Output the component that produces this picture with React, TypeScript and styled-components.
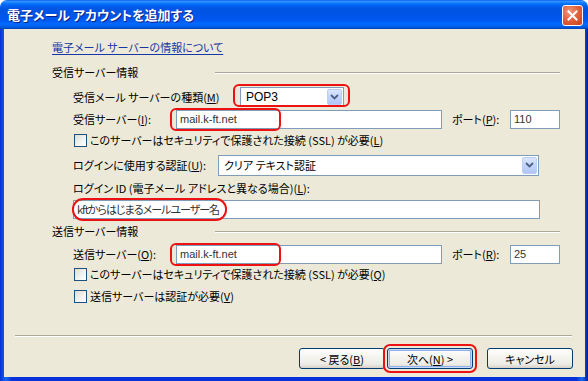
import React from 'react';
import styled, { createGlobalStyle } from 'styled-components';

const GlobalStyle = createGlobalStyle`
    html, body {
        margin: 0;
        padding: 0;
        background: #ffffff;
        overflow: hidden;
    }
    body {
        font-family: "Noto Sans CJK JP", "Liberation Sans", sans-serif;
        font-size: 11px;
        color: #000000;
        font-feature-settings: "palt";
    }
`;

const Window = styled.div`
    width: 588px;
    height: 381px;
    display: flex;
    flex-direction: column;
`;

const TitleBar = styled.div`
    height: 29px;
    flex: none;
    display: flex;
    align-items: center;
    justify-content: space-between;
    padding: 0 5px 0 7px;
    border-radius: 7px 7px 0 0;
    box-sizing: border-box;
    background: linear-gradient(
        to bottom,
        #0058ee 0%,
        #3593ff 4%,
        #288eff 7%,
        #127dff 10%,
        #036ffc 14%,
        #0262ee 20%,
        #0057e5 28%,
        #0054e3 40%,
        #0055eb 60%,
        #005bf5 72%,
        #026afe 82%,
        #0062ef 90%,
        #0052d6 96%,
        #0040ab 100%
    );
`;

const Title = styled.div`
    color: #ffffff;
    font-weight: 700;
    font-size: 13px;
    text-shadow: 1px 1px 0 #0a1f8a;
    line-height: 16px;
    margin-top: 1px;
`;

const CloseButton = styled.div`
    width: 21px;
    height: 21px;
    box-sizing: border-box;
    border: 1px solid #ffffff;
    border-radius: 3px;
    background: radial-gradient(circle at 35% 30%, #f09a7c 0%, #e2643f 45%, #c7401a 100%);
    display: flex;
    align-items: center;
    justify-content: center;
    margin-top: 1px;
`;

const Frame = styled.div`
    flex: 1;
    display: flex;
    padding: 0 4px 4px 4px;
    background: linear-gradient(to right, #0831d9 0%, #166aee 1%, #0831d9 2%, #0831d9 98%, #166aee 99%, #001ea0 100%);
`;

const Body = styled.div`
    flex: 1;
    background: #ece9d8;
    display: flex;
    flex-direction: column;
`;

const Content = styled.div`
    padding: 8px 25px 0 48px;
    display: flex;
    flex-direction: column;
`;

const Row = styled.div<{ $mt?: number; $indent?: boolean }>`
    display: flex;
    align-items: center;
    height: 20px;
    margin-top: ${p => p.$mt ?? 0}px;
    padding-left: ${p => (p.$indent ? 21 : 0)}px;
    white-space: nowrap;
`;

const Link = styled.span`
    color: #1538a6;
    text-decoration: underline;
    text-underline-offset: 2px;
`;

const SectionTitle = styled.div`
    width: 163px;
    flex: none;
`;

const Rule = styled.div`
    flex: 1;
    border-top: 1px solid #aca899;
    border-bottom: 1px solid #ffffff;
    margin-top: 1px;
`;

const Label = styled.div<{ $w?: number }>`
    width: ${p => (p.$w ? `${p.$w}px` : 'auto')};
    flex: none;
`;

const Field = styled.div<{ $w?: number }>`
    position: relative;
    width: ${p => (p.$w ? `${p.$w}px` : 'auto')};
    flex: none;
`;

const TextBox = styled.div<{ $latin?: boolean; $tight?: boolean }>`
    height: 19px;
    box-sizing: border-box;
    border: 1px solid #7f9db9;
    background: #ffffff;
    padding-left: 3px;
    display: flex;
    align-items: center;
    font-family: ${p => (p.$latin ? '"Liberation Sans", "Noto Sans CJK JP", sans-serif' : '"Noto Sans CJK JP", sans-serif')};
    font-size: 11px;
    letter-spacing: ${p => (p.$tight ? '-1px' : 'normal')};
    color: #333333;
`;

const Combo = styled.div<{ $h?: number }>`
    height: ${p => p.$h ?? 20}px;
    box-sizing: border-box;
    border: 1px solid #7f9db9;
    background: #ffffff;
    display: flex;
    align-items: center;
    padding: 1px;
`;

const ComboText = styled.div<{ $latin?: boolean }>`
    flex: 1;
    padding-left: 4px;
    font-family: ${p => (p.$latin ? '"Liberation Sans", "Noto Sans CJK JP", sans-serif' : '"Noto Sans CJK JP", sans-serif')};
    font-size: ${p => (p.$latin ? 12 : 11)}px;
`;

const DropButton = styled.div`
    width: 15px;
    align-self: stretch;
    box-sizing: border-box;
    border: 1px solid #bacdf4;
    border-radius: 2px;
    background: linear-gradient(to bottom, #dbe6fd 0%, #c2d4fb 50%, #b1c6f5 100%);
    display: flex;
    align-items: center;
    justify-content: center;
`;

const PortLabel = styled.div`
    width: 58px;
    margin-left: 10px;
    flex: none;
`;

const Ring = styled.div<{ $l: number; $t: number; $w: number; $h: number; $r?: number }>`
    position: absolute;
    left: ${p => p.$l}px;
    top: ${p => p.$t}px;
    width: ${p => p.$w}px;
    height: ${p => p.$h}px;
    box-sizing: border-box;
    border: 2px solid #ee1111;
    border-radius: ${p => p.$r ?? 6}px;
    pointer-events: none;
`;

const CheckBox = styled.div`
    width: 13px;
    height: 13px;
    box-sizing: border-box;
    border: 1px solid #1c5180;
    background: linear-gradient(135deg, #dcdcd7 0%, #f4f4f0 60%, #ffffff 100%);
    margin: 0 3px 0 1px;
    flex: none;
`;

const Footer = styled.div`
    margin-top: auto;
    padding-bottom: 8px;
`;

const Separator = styled.div`
    margin: 0 13px 0 11px;
    border-top: 1px solid #aca899;
    border-bottom: 1px solid #ffffff;
`;

const ButtonRow = styled.div`
    display: flex;
    justify-content: flex-end;
    padding-right: 12px;
    margin-top: 11px;
`;

const Button = styled.div<{ $ml?: number; $default?: boolean }>`
    position: relative;
    width: 86px;
    height: 21px;
    box-sizing: border-box;
    margin-left: ${p => p.$ml ?? 0}px;
    border: 1px solid #003c74;
    border-radius: 3px;
    background: linear-gradient(to bottom, #ffffff 0%, #f5f4ef 40%, #ecebe5 80%, #d6d0c5 100%);
    box-shadow: ${p => (p.$default ? 'inset 0 0 0 1px #c9daf6, inset 0 0 0 2px #8eb0ec' : 'none')};
    display: flex;
    align-items: center;
    justify-content: center;
    font-size: 11px;
    white-space: nowrap;
`;

const Chevron = () => (
    <svg width="9" height="6" viewBox="0 0 9 6">
        <path d="M1 1 L4.5 4.5 L8 1" fill="none" stroke="#4d6185" strokeWidth="1.8" />
    </svg>
);

const CloseX = () => (
    <svg width="11" height="11" viewBox="0 0 11 11">
        <path d="M1.5 1.5 L9.5 9.5 M9.5 1.5 L1.5 9.5" stroke="#ffffff" strokeWidth="2" strokeLinecap="square" />
    </svg>
);

export default function App() {
    return (
        <>
            <GlobalStyle />
            <Window>
                <TitleBar>
                    <Title>電子メール アカウントを追加する</Title>
                    <CloseButton>
                        <CloseX />
                    </CloseButton>
                </TitleBar>
                <Frame>
                    <Body>
                        <Content>
                            <Row>
                                <Link>電子メール サーバーの情報について</Link>
                            </Row>

                            <Row $mt={5}>
                                <SectionTitle>受信サーバー情報</SectionTitle>
                                <Rule />
                            </Row>

                            <Row $mt={5} $indent>
                                <Label $w={167}>受信メール サーバーの種類(<u>M</u>)</Label>
                                <Field $w={104}>
                                    <Combo>
                                        <ComboText $latin>POP3</ComboText>
                                        <DropButton>
                                            <Chevron />
                                        </DropButton>
                                    </Combo>
                                    <Ring $l={-7} $t={-3} $w={117} $h={23} />
                                </Field>
                            </Row>

                            <Row $mt={2} $indent>
                                <Label $w={103}>受信サーバー(<u>I</u>):</Label>
                                <Field $w={266}>
                                    <TextBox $latin>mail.k-ft.net</TextBox>
                                    <Ring $l={-6} $t={-2} $w={111} $h={23} />
                                </Field>
                                <PortLabel>ポート(<u>P</u>):</PortLabel>
                                <Field $w={50}>
                                    <TextBox $latin>110</TextBox>
                                </Field>
                            </Row>

                            <Row $mt={1} $indent>
                                <CheckBox />
                                <span>このサーバーはセキュリティで保護された接続 (SSL) が必要(<u>L</u>)</span>
                            </Row>

                            <Row $mt={5} $indent>
                                <Label $w={145}>ログインに使用する認証(<u>U</u>):</Label>
                                <Field $w={321}>
                                    <Combo $h={21}>
                                        <ComboText>クリア テキスト認証</ComboText>
                                        <DropButton>
                                            <Chevron />
                                        </DropButton>
                                    </Combo>
                                </Field>
                            </Row>

                            <Row $mt={3} $indent>
                                <Label>ログイン ID (電子メール アドレスと異なる場合)(<u>L</u>):</Label>
                            </Row>

                            <Row $mt={1} $indent>
                                <Field $w={467}>
                                    <TextBox $tight>kftからはじまるメールユーザー名</TextBox>
                                    <Ring $l={-1} $t={-2} $w={155} $h={23} $r={11} />
                                </Field>
                            </Row>

                            <Row $mt={2}>
                                <SectionTitle>送信サーバー情報</SectionTitle>
                                <Rule />
                            </Row>

                            <Row $mt={3} $indent>
                                <Label $w={103}>送信サーバー(<u>O</u>):</Label>
                                <Field $w={266}>
                                    <TextBox $latin>mail.k-ft.net</TextBox>
                                    <Ring $l={-6} $t={-2} $w={111} $h={23} />
                                </Field>
                                <PortLabel>ポート(<u>R</u>):</PortLabel>
                                <Field $w={50}>
                                    <TextBox $latin>25</TextBox>
                                </Field>
                            </Row>

                            <Row $indent>
                                <CheckBox />
                                <span>このサーバーはセキュリティで保護された接続 (SSL) が必要(<u>Q</u>)</span>
                            </Row>

                            <Row $mt={2} $indent>
                                <CheckBox />
                                <span>送信サーバーは認証が必要(<u>V</u>)</span>
                            </Row>
                        </Content>

                        <Footer>
                            <Separator />
                            <ButtonRow>
                                <Button>&lt; 戻る(<u>B</u>)</Button>
                                <Button $ml={2} $default>
                                    次へ(<u>N</u>) &gt;
                                    <Ring $l={-5} $t={-5} $w={94} $h={29} $r={7} />
                                </Button>
                                <Button $ml={14}>キャンセル</Button>
                            </ButtonRow>
                        </Footer>
                    </Body>
                </Frame>
            </Window>
        </>
    );
}
